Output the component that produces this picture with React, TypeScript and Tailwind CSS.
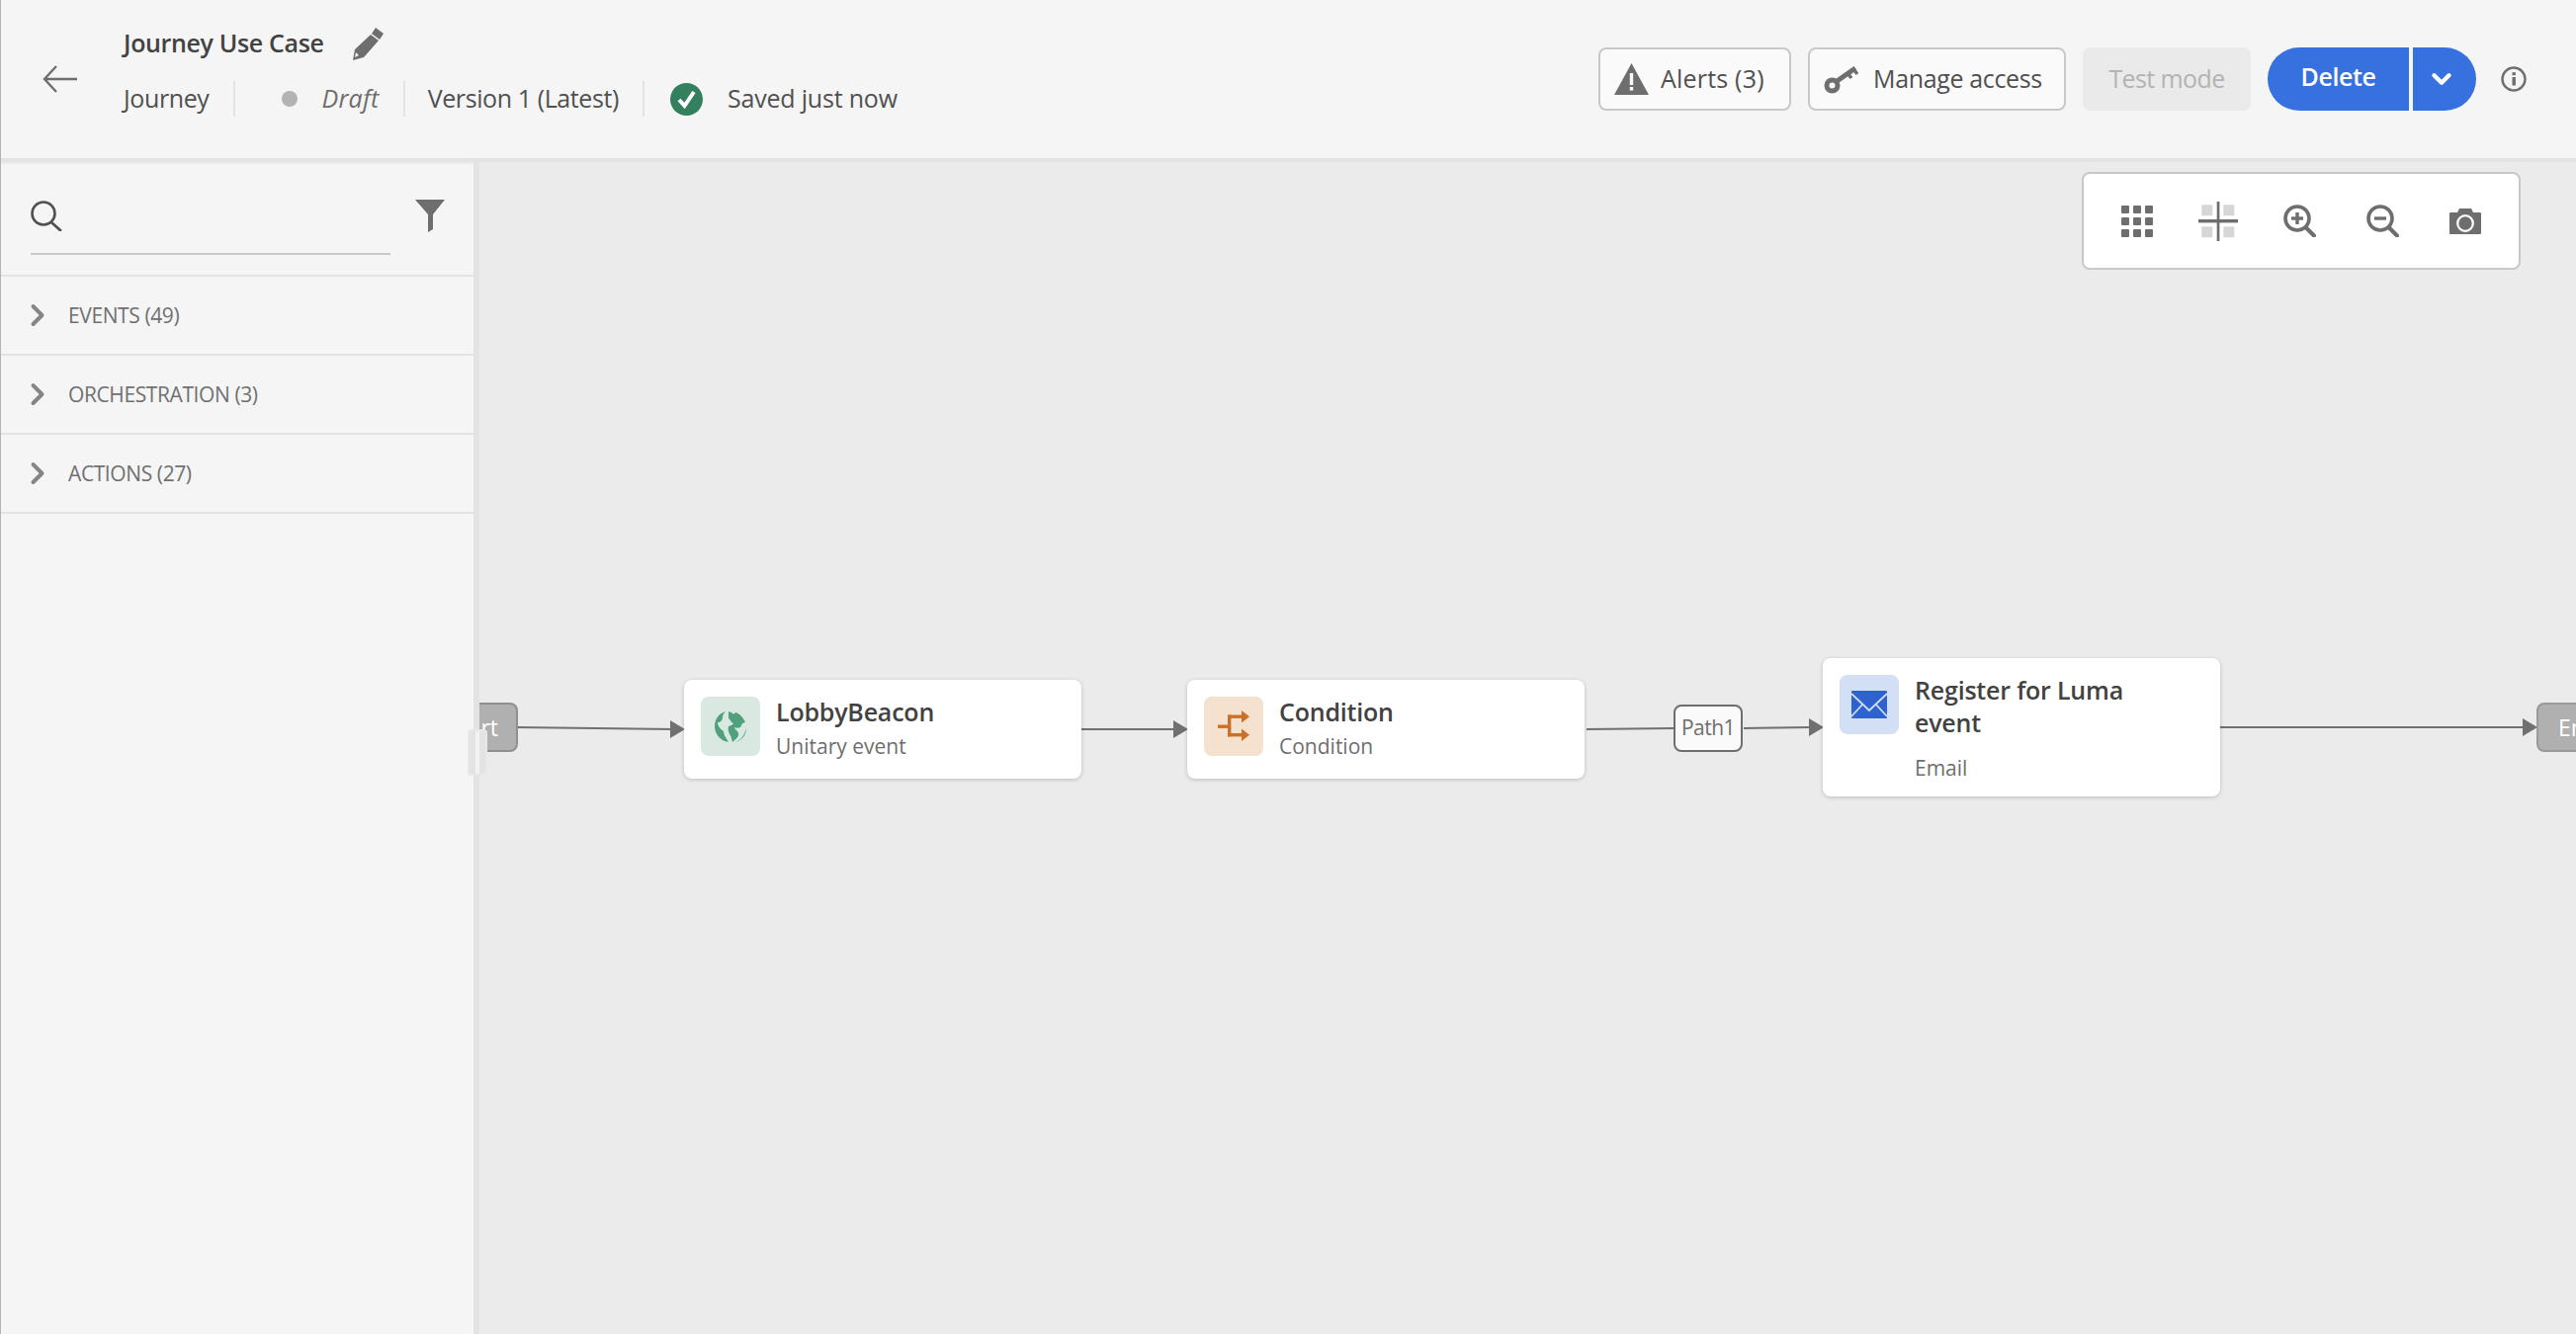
import React from 'react';
import { ChevronDown, ChevronRight } from 'lucide-react';

const Divider = () => <span className="block h-9 w-0.5 bg-[#e3e3e3]" />;

const BackArrow = () => (
  <svg width="35" height="28" viewBox="0 0 35 28" fill="none" stroke="#6e6e6e" strokeWidth="2.4">
    <path d="M35 14H2M14 1L2 14l12 13" />
  </svg>
);

const Pencil = () => (
  <svg width="33" height="33" viewBox="0 0 33 33" className="text-[#6e6e6e]">
    <path fill="currentColor" d="M25 0l8 6-4 6-8-6zM20 7l8 6-15 17-11 3 2-11z" />
    <path fill="#f5f5f5" d="M5 25l3 3-4 2z" />
  </svg>
);

const CheckBadge = () => (
  <svg width="33" height="33" viewBox="0 0 33 33">
    <circle cx="16.5" cy="16.5" r="16.5" fill="#33805f" />
    <path d="M9 17l5.5 6L24 9" fill="none" stroke="#fff" strokeWidth="4" />
  </svg>
);

const SearchIcon = () => (
  <svg width="32" height="31" viewBox="0 0 32 31" fill="none" stroke="#505050">
    <circle cx="13" cy="13" r="11.5" strokeWidth="2.6" />
    <path d="M21 22l9 8" strokeWidth="2.8" strokeLinecap="round" />
  </svg>
);

const AlertIcon = () => (
  <svg width="35" height="32" viewBox="0 0 35 32">
    <path fill="#6e6e6e" d="M17.5 0L35 32H0z" />
    <rect x="15.8" y="10" width="3.4" height="12" fill="#fafafa" />
    <rect x="15.8" y="24" width="3.4" height="3.6" fill="#fafafa" />
  </svg>
);

const KeyIcon = () => (
  <svg width="36" height="30" viewBox="0 0 36 30" fill="none" stroke="#6e6e6e">
    <circle cx="8.5" cy="21.5" r="5.5" strokeWidth="5" />
    <path d="M12 18L32 4" strokeWidth="5" />
    <path d="M24 9l4 5M30 5l4 5" strokeWidth="3.5" />
  </svg>
);

const InfoIcon = () => (
  <svg width="26" height="26" viewBox="0 0 26 26">
    <circle cx="13" cy="13" r="11.5" fill="none" stroke="#6e6e6e" strokeWidth="2.4" />
    <rect x="11.5" y="11" width="3.4" height="8.5" fill="#6e6e6e" />
    <rect x="11.5" y="6.2" width="3.4" height="3" fill="#6e6e6e" />
  </svg>
);

const FilterIcon = () => (
  <svg width="30" height="33" viewBox="0 0 30 33">
    <path fill="#6e6e6e" d="M0 0h30L18 15v15l-5 3V15z" />
  </svg>
);

const GridIcon = () => (
  <svg width="32" height="32" viewBox="0 0 32 32" fill="#6e6e6e">
    {[0, 12, 24].map((y) =>
      [0, 12, 24].map((x) => <rect key={`${x}-${y}`} x={x} y={y} width="8" height="8" rx="1" />),
    )}
  </svg>
);

const SnapIcon = () => (
  <svg width="40" height="40" viewBox="0 0 40 40">
    <g fill="#d6d6d6">
      <rect x="3.3" y="3.3" width="11" height="11" />
      <rect x="25.3" y="3.3" width="11" height="11" />
      <rect x="3.3" y="25.3" width="11" height="11" />
      <rect x="25.3" y="25.3" width="11" height="11" />
    </g>
    <rect x="18.7" y="0" width="2.7" height="40" fill="#6e6e6e" />
    <rect x="0" y="18" width="40" height="3.4" fill="#6e6e6e" />
  </svg>
);

const ZoomIcon = ({ plus }: { plus?: boolean }) => (
  <svg width="33" height="33" viewBox="0 0 33 33">
    <circle cx="14" cy="14" r="12" fill="none" stroke="#6e6e6e" strokeWidth="3.6" />
    <path d="M23 23.5l8 8" stroke="#6e6e6e" strokeWidth="4" strokeLinecap="round" />
    <rect x="8" y="12.3" width="12" height="3.4" fill="#6e6e6e" />
    {plus && <rect x="12.3" y="8" width="3.4" height="12" fill="#6e6e6e" />}
  </svg>
);

const CameraIcon = () => (
  <svg width="32" height="26" viewBox="0 0 32 26">
    <path fill="#6e6e6e" d="M1 4h7l2-4h12l2 4h7a1 1 0 0 1 1 1v20a1 1 0 0 1-1 1H1a1 1 0 0 1-1-1V5a1 1 0 0 1 1-1z" />
    <circle cx="16" cy="15" r="7.8" fill="none" stroke="#fff" strokeWidth="2.2" />
  </svg>
);

const GlobeIcon = () => (
  <svg width="32" height="32" viewBox="0 0 32 32" fill="#509f7d">
    <path d="M11 1C4 3 0 9 0 16c0 8 6 15 14 16-2-4-5-7-5-11-3-2-6-5-6-9 3 0 5-2 5-5 0-2 1-4 3-6z" />
    <path d="M14 1c2 1 4 1 5 3l2-2c4 1 8 5 10 10l-3 1-2 4c-2 1-4 1-6 0 0 2 3 3 4 6 1 4-4 7-6 9-1-3-1-6-3-8-1-3-2-5-1-8 2-1 4-1 5-3-3-1-3-4-5-5z" />
    <path d="M20 32c5-1 9-5 11-11l1-3c0 7-5 13-12 14z" />
  </svg>
);

const ConditionIcon = () => (
  <svg width="32" height="32" viewBox="0 0 32 32" fill="#c9712a">
    <rect x="0" y="14.5" width="12" height="3.4" />
    <rect x="10" y="4.5" width="3.4" height="22" />
    <rect x="10" y="4.5" width="16" height="3.4" />
    <rect x="10" y="23" width="16" height="3.4" />
    <path d="M24 0l8 6.2-8 6.2zM24 18.5l8 6.2-8 6.2z" />
  </svg>
);

const MailIcon = () => (
  <svg width="36" height="28" viewBox="0 0 36 28">
    <rect width="36" height="28" rx="1" fill="#2d62cf" />
    <path d="M0 3l18 17L36 3M0 26l12-13M36 26L24 13" fill="none" stroke="#d3dff5" strokeWidth="1.8" />
  </svg>
);

type NodeProps = {
  left: string;
  iconBg: string;
  icon: React.ReactNode;
  title: string;
  subtitle: string;
};

const JourneyNode = ({ left, iconBg, icon, title, subtitle }: NodeProps) => (
  <div
    className={`absolute top-[524px] flex h-[100px] w-[402px] gap-[16px] rounded-lg bg-white p-[17px] shadow-[0_1px_4px_rgba(0,0,0,0.2)] ${left}`}
  >
    <div className={`flex h-[60px] w-[60px] items-center justify-center rounded-lg ${iconBg}`}>{icon}</div>
    <div className="-mt-px">
      <div className="text-[25px] leading-8 font-semibold tracking-[-0.2px] text-[#424242]">{title}</div>
      <div className="mt-[5px] text-[21px] leading-7 text-[#6e6e6e]">{subtitle}</div>
    </div>
  </div>
);

const Section = ({ label }: { label: string }) => (
  <div className="flex h-20 items-center border-b-2 border-[#e3e3e3] pl-[19px]">
    <ChevronRight size={36} strokeWidth={2.6} className="text-[#858585]" />
    <span className="ml-[13px] pt-px text-[21px] tracking-[-0.4px] text-[#707070]">{label}</span>
  </div>
);

export default function App() {
  return (
    <div className="flex h-[1350px] w-[2606px] flex-col overflow-hidden border-l border-[#b3b3b3] bg-[#ebebeb] font-['Open_Sans',sans-serif]">
      <div className="flex h-[164px] shrink-0 items-center border-b-4 border-[#e3e3e3] bg-[#f5f5f5] pl-[42px] pr-[50px]">
        <BackArrow />
        <div className="ml-[47px] -mt-[16px] flex flex-col">
          <div className="flex h-[44px] items-center gap-[27px]">
            <span className="text-[25px] font-semibold tracking-[-0.35px] text-[#424242]">Journey Use Case</span>
            <Pencil />
          </div>
          <div className="mt-[12px] flex h-[44px] items-center text-[25px] tracking-[-0.4px] text-[#505050]">
            <span>Journey</span>
            <span className="ml-[25px]"><Divider /></span>
            <span className="ml-[47px] h-4 w-4 rounded-full bg-[#b3b3b3]" />
            <span className="ml-[24px] italic tracking-[0.3px] text-[#6e6e6e]">Draft</span>
            <span className="ml-[24px]"><Divider /></span>
            <span className="ml-[23px]">Version 1 (Latest)</span>
            <span className="ml-[24px]"><Divider /></span>
            <span className="ml-[26px] flex"><CheckBadge /></span>
            <span className="ml-[25px] tracking-[-0.2px]">Saved just now</span>
          </div>
        </div>
        <div className="ml-auto flex items-center">
          <div className="flex h-16 w-[195px] items-center gap-[12px] rounded-lg border-2 border-[#c8c8c8] bg-[#fafafa] pl-[14px] text-[25px] tracking-[0.2px] text-[#505050]">
            <AlertIcon />
            Alerts (3)
          </div>
          <div className="ml-[17px] flex h-16 w-[261px] items-center gap-[14px] rounded-lg border-2 border-[#c8c8c8] bg-[#fafafa] pl-[14px] text-[25px] tracking-[-0.35px] text-[#505050]">
            <KeyIcon />
            Manage access
          </div>
          <div className="ml-[17px] flex h-16 w-[170px] items-center justify-center rounded-lg bg-[#eaeaea] text-[25px] tracking-[-0.6px] text-[#b3b3b3]">
            Test mode
          </div>
          <div className="ml-[17px] flex h-16 w-[143px] items-center justify-center rounded-l-[32px] bg-[#3771e0] pb-1 text-[25px] font-semibold tracking-[-0.4px] text-white">
            Delete
          </div>
          <div className="ml-1 flex h-16 w-16 items-center justify-center rounded-r-[32px] bg-[#3771e0] pr-1.5 text-white">
            <ChevronDown size={30} strokeWidth={3.5} />
          </div>
          <div className="ml-[25px] flex"><InfoIcon /></div>
        </div>
      </div>

      <div className="relative flex min-h-0 flex-1">
        <div className="flex w-[484px] shrink-0 flex-col border-r-[6px] border-[#e3e3e3]">
          <div className="h-full bg-[#f5f5f5]">
            <div className="flex h-[116px] border-y-2 border-t-[#ebebeb] border-b-[#e3e3e3] pl-[30px]">
              <div className="mt-[32px] flex h-[60px] w-[364px] border-b-2 border-[#c8c8c8] pt-[5px]">
                <SearchIcon />
              </div>
              <div className="ml-[25px] mt-[36px]"><FilterIcon /></div>
            </div>
            <Section label="EVENTS (49)" />
            <Section label="ORCHESTRATION (3)" />
            <Section label="ACTIONS (27)" />
          </div>
        </div>

        <div className="relative flex-1">
          <div className="absolute left-[-485px] top-0 h-full w-[2606px]">
            <svg className="absolute left-0 top-0" width="2606" height="800" fill="none">
              <g stroke="#707070" strokeWidth="2">
                <path d="M522 572 L602 573 L682 574" />
                <path d="M1093 574 H1188" />
                <path d="M1605 574 L1694 573" />
                <path d="M1764 573 L1832 572" />
                <path d="M2246 572 H2554" />
              </g>
              <g fill="#707070">
                <path d="M678 565l15 9-15 9z" />
                <path d="M1187 565l15 9-15 9z" />
                <path d="M1830 563l15 9-15 9z" />
                <path d="M2552 563l15 9-15 9z" />
              </g>
            </svg>

            <div className="absolute left-[485px] top-[547px] flex h-[50px] w-[39px] items-center justify-end rounded-r-lg border-2 border-l-0 border-[#8f8f8f] bg-[#b0b0b0] pr-[18px] text-[23px] text-white">
              rt
            </div>
            <div className="absolute left-[473px] top-[574px] h-[47px] w-5 rounded border-2 border-[#e8e8e8] bg-[#e3e3e3]">
              <div className="mx-auto h-full w-1 bg-[#f2f2f2]" />
            </div>

            <JourneyNode
              left="left-[692px]"
              iconBg="bg-[#d9e9e2]"
              icon={<GlobeIcon />}
              title="LobbyBeacon"
              subtitle="Unitary event"
            />
            <JourneyNode
              left="left-[1201px]"
              iconBg="bg-[#f4e2cf]"
              icon={<ConditionIcon />}
              title="Condition"
              subtitle="Condition"
            />

            <div className="absolute left-[1693px] top-[549px] flex h-12 w-[70px] items-center justify-center rounded-lg border-2 border-[#6e6e6e] bg-[#fafafa] text-[21px] tracking-[-0.5px] text-[#6e6e6e]">
              Path1
            </div>

            <div className="absolute left-[1844px] top-[502px] flex h-[140px] w-[402px] gap-[16px] rounded-lg bg-white p-[17px] shadow-[0_1px_4px_rgba(0,0,0,0.2)]">
              <div className="flex h-[60px] w-[60px] items-center justify-center rounded-lg bg-[#d3dff5]">
                <MailIcon />
              </div>
              <div className="-mt-px w-[240px]">
                <div className="text-[25px] leading-[33px] font-semibold tracking-[-0.2px] text-[#424242]">
                  Register for Luma event
                </div>
                <div className="mt-[15px] text-[21px] leading-7 text-[#6e6e6e]">Email</div>
              </div>
            </div>

            <div className="absolute left-[2566px] top-[547px] h-[50px] w-[60px] rounded-l-lg border-2 border-r-0 border-[#9a9a9a] bg-[#b0b0b0] pl-[20px] text-[23px] leading-[46px] text-white">
              End
            </div>

            <div className="absolute left-[2106px] top-[10px] flex h-[99px] w-[444px] items-center rounded-lg border-2 border-[#c8c8c8] bg-white pl-[38px]">
              <GridIcon />
              <span className="ml-[46px] flex"><SnapIcon /></span>
              <span className="ml-[46px] flex"><ZoomIcon plus /></span>
              <span className="ml-[51px] flex"><ZoomIcon /></span>
              <span className="ml-[51px] flex"><CameraIcon /></span>
            </div>
          </div>
        </div>
      </div>
    </div>
  );
}
